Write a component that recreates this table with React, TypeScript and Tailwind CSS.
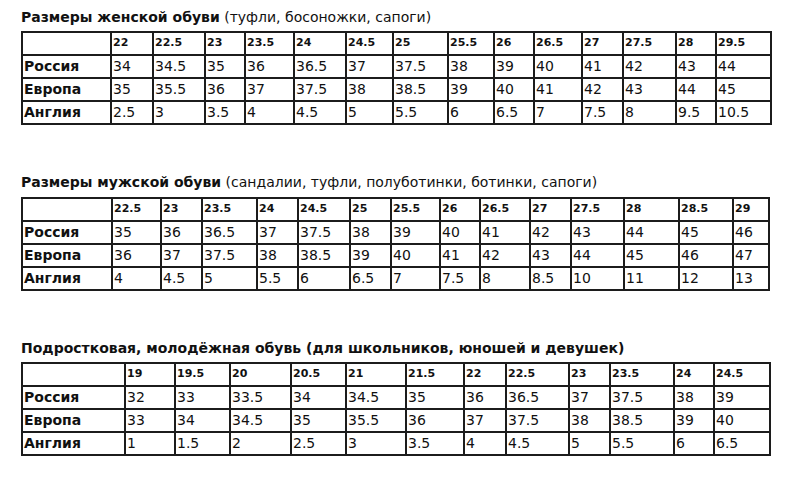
const women = {
  sizes: ["22", "22.5", "23", "23.5", "24", "24.5", "25", "25.5", "26", "26.5", "27", "27.5", "28", "29.5"],
  rows: [
    { label: "Россия", values: ["34", "34.5", "35", "36", "36.5", "37", "37.5", "38", "39", "40", "41", "42", "43", "44"] },
    { label: "Европа", values: ["35", "35.5", "36", "37", "37.5", "38", "38.5", "39", "40", "41", "42", "43", "44", "45"] },
    { label: "Англия", values: ["2.5", "3", "3.5", "4", "4.5", "5", "5.5", "6", "6.5", "7", "7.5", "8", "9.5", "10.5"] },
  ],
};

const men = {
  sizes: ["22.5", "23", "23.5", "24", "24.5", "25", "25.5", "26", "26.5", "27", "27.5", "28", "28.5", "29"],
  rows: [
    { label: "Россия", values: ["35", "36", "36.5", "37", "37.5", "38", "39", "40", "41", "42", "43", "44", "45", "46"] },
    { label: "Европа", values: ["36", "37", "37.5", "38", "38.5", "39", "40", "41", "42", "43", "44", "45", "46", "47"] },
    { label: "Англия", values: ["4", "4.5", "5", "5.5", "6", "6.5", "7", "7.5", "8", "8.5", "10", "11", "12", "13"] },
  ],
};

const teens = {
  sizes: ["19", "19.5", "20", "20.5", "21", "21.5", "22", "22.5", "23", "23.5", "24", "24.5"],
  rows: [
    { label: "Россия", values: ["32", "33", "33.5", "34", "34.5", "35", "36", "36.5", "37", "37.5", "38", "39"] },
    { label: "Европа", values: ["33", "34", "34.5", "35", "35.5", "36", "37", "37.5", "38", "38.5", "39", "40"] },
    { label: "Англия", values: ["1", "1.5", "2", "2.5", "3", "3.5", "4", "4.5", "5", "5.5", "6", "6.5"] },
  ],
};

type Table = { sizes: string[]; rows: { label: string; values: string[] }[] };

function SizeTable({ data, cols }: { data: Table; cols: string }) {
  return (
    <div className={`grid w-max gap-[2px] bg-[#1c1c1c] p-[2px] ${cols} auto-rows-[21px]`}>
      {/* Header row */}
      <div className="bg-white" />
      {data.sizes.map((s, i) => (
        <div key={i} className="flex items-center bg-white pl-[1px] text-[11px] font-bold">
          {s}
        </div>
      ))}

      {/* Country rows */}
      {data.rows.map((row) => [
        <div key={row.label} className="flex items-center bg-white pl-[1px] text-[14px] font-bold">
          {row.label}
        </div>,
        ...row.values.map((v, i) => (
          <div key={row.label + i} className="flex items-center bg-white pl-[1px] text-[14px]">
            {v}
          </div>
        )),
      ])}
    </div>
  );
}

export default function App() {
  return (
    <div className="min-h-[492px] w-[789px] bg-white pl-[21px] pt-[9px] text-[#111] font-['DejaVu_Sans',Verdana,sans-serif]">
      <h2 className="mb-[5px] text-[14px] leading-[17px]">
        <span className="font-bold">Размеры женской обуви</span> (туфли, босоножки, сапоги)
      </h2>
      <SizeTable
        data={women}
        cols="grid-cols-[87px_40px_50px_38px_47px_50px_45px_53px_44px_38px_46px_39px_51px_38px_53px]"
      />

      <h2 className="mb-[6px] mt-[49px] text-[14px] leading-[17px]">
        <span className="font-bold">Размеры мужской обуви</span> (сандалии, туфли, полуботинки, ботинки, сапоги)
      </h2>
      <SizeTable
        data={men}
        cols="grid-cols-[88px_47px_39px_53px_39px_50px_39px_47px_38px_48px_39px_51px_53px_52px_34px]"
      />

      <h2 className="mb-[5px] mt-[49px] text-[14px] font-bold leading-[17px]">
        Подростковая, молодёжная обувь (для школьников, юношей и девушек)
      </h2>
      <SizeTable
        data={teens}
        cols="grid-cols-[101px_48px_53px_59px_53px_58px_56px_40px_61px_39px_62px_38px_54px]"
      />
    </div>
  );
}
